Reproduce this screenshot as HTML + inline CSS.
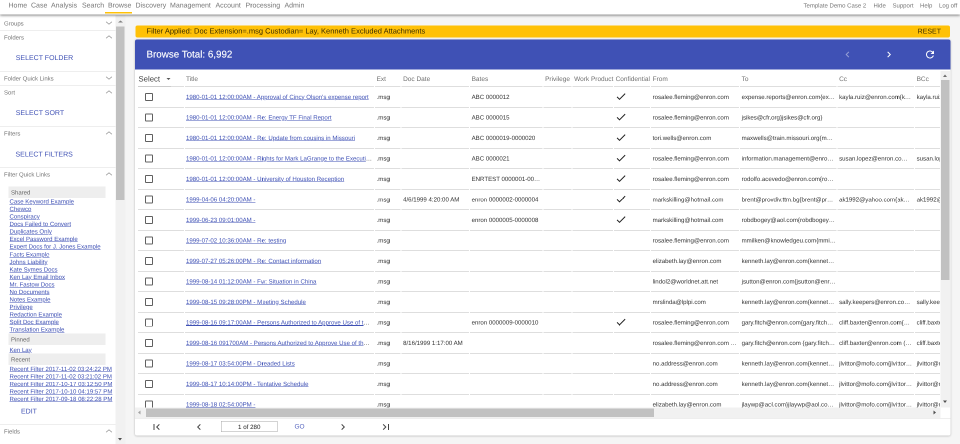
<!DOCTYPE html>
<html lang="en"><head><meta charset="utf-8"><title>Browse</title>
<style>
html,body{margin:0;padding:0;width:960px;height:444px;overflow:hidden;background:#f5f5f5;}
#s{position:absolute;left:0;top:0;width:1920px;height:888px;transform:scale(.5);transform-origin:0 0;will-change:transform;font-family:"Liberation Sans",Arial,sans-serif;color:#333;overflow:hidden;background:#f5f5f5;text-rendering:geometricPrecision;}
#s *{box-sizing:border-box;}
#f{position:absolute;left:0;top:0;width:1920px;height:888px;filter:blur(0.45px);}
a{color:#3f51b5;text-decoration:underline;}
/* nav */
#nav{position:absolute;left:0;top:0;width:1920px;height:29px;background:#fff;box-shadow:0 2px 5px rgba(0,0,0,.5);z-index:5;font-size:14px;color:#777;}
#nav span{position:absolute;top:2px;line-height:16px;white-space:nowrap;}
#nav .r{font-size:12px;top:3px;}
#nav i{position:absolute;left:210px;top:24px;width:54px;height:3px;background:#ffc107;}
/* sidebar */
#side{position:absolute;left:0;top:30px;width:231px;height:858px;background:#fff;}
#sbar{position:absolute;left:230.5px;top:30px;width:20.5px;height:858px;background:#f1f1f1;}
#sbar b{position:absolute;left:1.7px;top:23px;width:16.5px;height:346.500px;background:#c1c1c1;}
.ph{position:absolute;left:0;width:231px;height:1px;background:#ddd;}
.pt{position:absolute;left:8px;margin-top:0;font-size:12px;line-height:16px;color:#777;white-space:nowrap;}
.chev{position:absolute;left:206px;margin-top:-1.5px;fill:none;stroke:#858585;stroke-width:1.3;}
.btn{position:absolute;font-size:14px;line-height:16px;color:#3f51b5;white-space:nowrap;}
.gb{position:absolute;left:17px;width:194px;height:23px;background:#eee;font-size:12px;line-height:24px;padding-left:5px;color:#666;}
.qls{position:absolute;left:19px;}
.ql{font-size:12.1px;line-height:15.09px;height:15.09px;white-space:nowrap;}
/* main */
#yb{position:absolute;left:271px;top:51px;width:1629px;height:24px;background:#ffc107;border-radius:4px;font-size:15px;line-height:23px;color:#3a2c00;}
#yb span{position:absolute;left:22px;top:0;white-space:nowrap;}
#yb em{position:absolute;right:18px;top:-0.5px;font-style:normal;font-size:14px;}
#card{position:absolute;left:270px;top:79px;width:1631px;height:792px;background:#fff;border-radius:4px;box-shadow:0 1px 4px rgba(0,0,0,.27);}
#bh{position:absolute;left:0;top:0;width:1631px;height:60px;background:#3f51b5;border-radius:4px 4px 0 0;color:#fff;font-size:20px;}
#bh span{position:absolute;left:23px;top:18px;font-size:19.6px;line-height:24px;-webkit-text-stroke:0.25px #fff;white-space:nowrap;}
#bh svg{position:absolute;top:18px;fill:#fff;}
#sc{position:absolute;left:0;top:63px;width:1610px;height:673px;overflow:hidden;}
#vs{position:absolute;left:1610.5px;top:63px;width:19.5px;height:673px;background:#f1f1f1;}
#vs b{position:absolute;left:1.5px;top:18px;width:16.5px;height:400px;background:#c1c1c1;}
#hs{position:absolute;left:0;top:736px;width:1610.5px;height:21px;background:#f1f1f1;}
#hs b{position:absolute;left:22px;top:1.5px;width:1016px;height:17px;background:#c1c1c1;}
.ar{position:absolute;width:0;height:0;border:4px solid transparent;}
#tb{position:absolute;left:0;top:0;width:1720px;height:700px;font-size:12.2px;color:#333;}
.hr,.tr{position:absolute;left:0;width:1720px;}
.hr{top:2px;height:30px;font-size:13px;color:#707070;}
.tr{height:39px;}
.c{position:absolute;top:0;height:100%;border-bottom:1px solid #bdbdbd;white-space:nowrap;}
.ht{position:absolute;left:3.2px;top:5.5px;line-height:15px;}
.c2 .ht,.c2 .el{left:2px !important;}
.st{position:absolute;left:1px;top:6px;font-size:15.5px;line-height:18px;color:#444;}
.sa{position:absolute;left:57px;top:12px;width:0;height:0;border-left:4px solid transparent;border-right:4px solid transparent;border-top:4px solid #555;}
.su{position:absolute;left:0;bottom:-1px;width:66px;height:1px;background:#bbb;}
.el{overflow:hidden;text-overflow:ellipsis;white-space:nowrap;position:absolute;left:3.2px;top:10.6px;line-height:14px;height:14px;max-width:100%;}
.c2 .el{width:373px;}.c5 .el{width:138px;}.c9 .el{width:169px;}.c10 .el{width:189px;}.c11 .el{width:146px;}
.cb{position:absolute;left:13.5px;top:10px;width:16px;height:16px;border:2px solid #606060;border-radius:2px;}
.chk{position:absolute;left:2px;top:5px;fill:#222;}
#pg{position:absolute;left:0;top:757px;width:1631px;height:35px;border-top:1px solid #ddd;}
#pg svg{position:absolute;top:5px;fill:#444;}
#pg .pi{position:absolute;left:172px;top:5px;width:113px;height:22px;border:1px solid #a8a8a8;font-size:12.4px;line-height:22px;text-align:center;color:#222;background:#fff;}
#pg span{position:absolute;left:319px;top:7.5px;font-size:13px;line-height:16px;color:#4f5fbd;}
</style></head><body>
<div id="s"><div id="f">
<div id="nav">
<span style="left:17px">Home</span><span style="left:62px">Case</span><span style="left:102px">Analysis</span><span style="left:164px">Search</span><span style="left:216px">Browse</span><span style="left:271px">Discovery</span><span style="left:340px">Management</span><span style="left:431px">Account</span><span style="left:491px">Processing</span><span style="left:569px">Admin</span>
<i></i>
<span class="r" style="left:1607px">Template Demo Case 2</span><span class="r" style="left:1747px">Hide</span><span class="r" style="left:1785px">Support</span><span class="r" style="left:1840px">Help</span><span class="r" style="left:1878px">Log off</span>
</div>

<div id="side">
<div class="pt" style="top:9px">Groups</div><svg class="chev" style="top:5px" viewBox="0 0 24 24" width="24" height="24"><path d="M6.2 9.600L12 14.400l5.800-4.800"/></svg>
<div class="ph" style="top:31px"></div>
<div class="pt" style="top:37px">Folders</div><svg class="chev" style="top:33px" viewBox="0 0 24 24" width="24" height="24"><path d="M6.2 14.400L12 9.600l5.800 4.800"/></svg>
<div class="btn" style="left:31.5px;top:77px">SELECT FOLDER</div>
<div class="ph" style="top:113px"></div>
<div class="pt" style="top:119px">Folder Quick Links</div><svg class="chev" style="top:115px" viewBox="0 0 24 24" width="24" height="24"><path d="M6.2 9.600L12 14.400l5.800-4.800"/></svg>
<div class="ph" style="top:141px"></div>
<div class="pt" style="top:147px">Sort</div><svg class="chev" style="top:143px" viewBox="0 0 24 24" width="24" height="24"><path d="M6.2 14.400L12 9.600l5.800 4.800"/></svg>
<div class="btn" style="left:31.5px;top:187px">SELECT SORT</div>
<div class="ph" style="top:223px"></div>
<div class="pt" style="top:229px">Filters</div><svg class="chev" style="top:225px" viewBox="0 0 24 24" width="24" height="24"><path d="M6.2 14.400L12 9.600l5.800 4.800"/></svg>
<div class="btn" style="left:31px;top:270px">SELECT FILTERS</div>
<div class="ph" style="top:304px"></div>
<div class="pt" style="top:311px">Filter Quick Links</div><svg class="chev" style="top:307px" viewBox="0 0 24 24" width="24" height="24"><path d="M6.2 14.400L12 9.600l5.800 4.800"/></svg>
<div class="gb" style="top:343px">Shared</div>
<div class="qls" style="top:366px">
<div class="ql"><a>Case Keyword Example</a></div>
<div class="ql"><a>Chewco</a></div>
<div class="ql"><a>Conspiracy</a></div>
<div class="ql"><a>Docs Failed to Convert</a></div>
<div class="ql"><a>Duplicates Only</a></div>
<div class="ql"><a>Excel Password Example</a></div>
<div class="ql"><a>Expert Docs for J. Jones Example</a></div>
<div class="ql"><a>Facts Example</a></div>
<div class="ql"><a>Johns Liability</a></div>
<div class="ql"><a>Kate Symes Docs</a></div>
<div class="ql"><a>Ken Lay Email Inbox</a></div>
<div class="ql"><a>Mr. Fastow Docs</a></div>
<div class="ql"><a>No Documents</a></div>
<div class="ql"><a>Notes Example</a></div>
<div class="ql"><a>Privilege</a></div>
<div class="ql"><a>Redaction Example</a></div>
<div class="ql"><a>Split Doc Example</a></div>
<div class="ql"><a>Translation Example</a></div>
</div>
<div class="gb" style="top:637px">Pinned</div>
<div class="qls" style="top:662.5px"><div class="ql"><a>Ken Lay</a></div></div>
<div class="gb" style="top:677px">Recent</div>
<div class="qls" style="top:700.5px">
<div class="ql"><a>Recent Filter 2017-11-02 03:24:22 PM</a></div>
<div class="ql"><a>Recent Filter 2017-11-02 03:21:02 PM</a></div>
<div class="ql"><a>Recent Filter 2017-10-17 03:12:50 PM</a></div>
<div class="ql"><a>Recent Filter 2017-10-10 04:19:57 PM</a></div>
<div class="ql"><a>Recent Filter 2017-09-18 08:22:28 PM</a></div>
</div>
<div class="btn" style="left:42px;top:784px">EDIT</div>
<div class="ph" style="top:818px"></div>
<div class="pt" style="top:825px">Fields</div><svg class="chev" style="top:821px" viewBox="0 0 24 24" width="24" height="24"><path d="M6.2 14.400L12 9.600l5.800 4.800"/></svg>
</div>
<div id="sbar"><b></b><div class="ar" style="left:5px;top:11px;border-width:0 5px 4.5px 5px;border-bottom-color:#808080"></div><div class="ar" style="left:5.5px;top:846px;border-width:5px 4.5px 0 4.5px;border-top-color:#505050"></div></div>

<div id="yb"><span>Filter Applied: Doc Extension=.msg Custodian= Lay, Kenneth Excluded Attachments</span><em>RESET</em></div>

<div id="card">
<div id="bh"><span>Browse Total: 6,992</span>
<svg style="left:1413px;opacity:.45" viewBox="0 0 24 24" width="24" height="24"><path d="M15.41 7.41L14 6l-6 6 6 6 1.41-1.41L10.83 12z"/></svg>
<svg style="left:1496px" viewBox="0 0 24 24" width="24" height="24"><path d="M10 6L8.59 7.41 13.17 12l-4.58 4.59L10 18l6-6z"/></svg>
<svg style="left:1578px" viewBox="0 0 24 24" width="24" height="24"><path d="M17.65 6.35C16.2 4.9 14.21 4 12 4c-4.42 0-7.99 3.58-7.99 8s3.57 8 7.99 8c3.73 0 6.84-2.55 7.73-6h-2.08c-.82 2.33-3.04 4-5.65 4-3.31 0-6-2.69-6-6s2.690-6 6-6c1.66 0 3.14.69 4.22 1.78L13 11h7V4l-2.35 2.35z"/></svg>
</div>
<div id="sc">
<div id="tb">
<div class="hr"><div class="c c1" style="left:6px;width:92px"><span class="st">Select</span><i class="sa"></i><i class="su"></i></div><div class="c c2" style="left:100px;width:378px"><span class="ht">Title</span></div><div class="c c3" style="left:480px;width:51px"><span class="ht">Ext</span></div><div class="c c4" style="left:533px;width:135px"><span class="ht">Doc Date</span></div><div class="c c5" style="left:670px;width:145px"><span class="ht">Bates</span></div><div class="c c6" style="left:817px;width:56px"><span class="ht">Privilege</span></div><div class="c c7" style="left:875px;width:81px"><span class="ht">Work Product</span></div><div class="c c8" style="left:958px;width:72px"><span class="ht">Confidential</span></div><div class="c c9" style="left:1032px;width:176px"><span class="ht">From</span></div><div class="c c10" style="left:1210px;width:193px"><span class="ht">To</span></div><div class="c c11" style="left:1405px;width:153px"><span class="ht">Cc</span></div><div class="c c12" style="left:1560px;width:160px"><span class="ht">BCc</span></div></div>
<div class="tr" style="top:34px"><div class="c c1" style="left:6px;width:92px"><span class="cb"></span></div><div class="c c2" style="left:100px;width:378px"><div class="el"><a>1980-01-01 12:00:00AM - Approval of Cincy Olson&#x27;s expense report</a></div></div><div class="c c3" style="left:480px;width:51px"><div class="el">.msg</div></div><div class="c c4" style="left:533px;width:135px"><div class="el"></div></div><div class="c c5" style="left:670px;width:145px"><div class="el">ABC 0000012</div></div><div class="c c6" style="left:817px;width:56px"></div><div class="c c7" style="left:875px;width:81px"></div><div class="c c8" style="left:958px;width:72px"><svg class="chk" viewBox="0 0 24 24" width="24" height="24"><path d="M9 16.2L4.8 12l-1.4 1.4L9 19 21 7l-1.4-1.4L9 16.2z"/></svg></div><div class="c c9" style="left:1032px;width:176px"><div class="el">rosalee.fleming@enron.com</div></div><div class="c c10" style="left:1210px;width:193px"><div class="el">expense.reports@enron.com{expense.reports@enron.com}</div></div><div class="c c11" style="left:1405px;width:153px"><div class="el">kayla.ruiz@enron.com{kayla.ruiz@enron.com}</div></div><div class="c c12" style="left:1560px;width:160px"><div class="el">kayla.ruiz@enron.com</div></div></div>
<div class="tr" style="top:75px"><div class="c c1" style="left:6px;width:92px"><span class="cb"></span></div><div class="c c2" style="left:100px;width:378px"><div class="el"><a>1980-01-01 12:00:00AM - Re: Energy TF Final Report</a></div></div><div class="c c3" style="left:480px;width:51px"><div class="el">.msg</div></div><div class="c c4" style="left:533px;width:135px"><div class="el"></div></div><div class="c c5" style="left:670px;width:145px"><div class="el">ABC 0000015</div></div><div class="c c6" style="left:817px;width:56px"></div><div class="c c7" style="left:875px;width:81px"></div><div class="c c8" style="left:958px;width:72px"><svg class="chk" viewBox="0 0 24 24" width="24" height="24"><path d="M9 16.2L4.8 12l-1.4 1.4L9 19 21 7l-1.4-1.4L9 16.2z"/></svg></div><div class="c c9" style="left:1032px;width:176px"><div class="el">rosalee.fleming@enron.com</div></div><div class="c c10" style="left:1210px;width:193px"><div class="el">jsikes@cfr.org}jsikes@cfr.org}</div></div><div class="c c11" style="left:1405px;width:153px"><div class="el"></div></div><div class="c c12" style="left:1560px;width:160px"><div class="el"></div></div></div>
<div class="tr" style="top:116px"><div class="c c1" style="left:6px;width:92px"><span class="cb"></span></div><div class="c c2" style="left:100px;width:378px"><div class="el"><a>1980-01-01 12:00:00AM - Re: Update from cousins in Missouri</a></div></div><div class="c c3" style="left:480px;width:51px"><div class="el">.msg</div></div><div class="c c4" style="left:533px;width:135px"><div class="el"></div></div><div class="c c5" style="left:670px;width:145px"><div class="el">ABC 0000019-0000020</div></div><div class="c c6" style="left:817px;width:56px"></div><div class="c c7" style="left:875px;width:81px"></div><div class="c c8" style="left:958px;width:72px"><svg class="chk" viewBox="0 0 24 24" width="24" height="24"><path d="M9 16.2L4.8 12l-1.4 1.4L9 19 21 7l-1.4-1.4L9 16.2z"/></svg></div><div class="c c9" style="left:1032px;width:176px"><div class="el">tori.wells@enron.com</div></div><div class="c c10" style="left:1210px;width:193px"><div class="el">maxwells@train.missouri.org{maxwells@train.missouri.org}</div></div><div class="c c11" style="left:1405px;width:153px"><div class="el"></div></div><div class="c c12" style="left:1560px;width:160px"><div class="el"></div></div></div>
<div class="tr" style="top:157px"><div class="c c1" style="left:6px;width:92px"><span class="cb"></span></div><div class="c c2" style="left:100px;width:378px"><div class="el"><a>1980-01-01 12:00:00AM - Rights for Mark LaGrange to the Executive Committee</a></div></div><div class="c c3" style="left:480px;width:51px"><div class="el">.msg</div></div><div class="c c4" style="left:533px;width:135px"><div class="el"></div></div><div class="c c5" style="left:670px;width:145px"><div class="el">ABC 0000021</div></div><div class="c c6" style="left:817px;width:56px"></div><div class="c c7" style="left:875px;width:81px"></div><div class="c c8" style="left:958px;width:72px"><svg class="chk" viewBox="0 0 24 24" width="24" height="24"><path d="M9 16.2L4.8 12l-1.4 1.4L9 19 21 7l-1.4-1.4L9 16.2z"/></svg></div><div class="c c9" style="left:1032px;width:176px"><div class="el">rosalee.fleming@enron.com</div></div><div class="c c10" style="left:1210px;width:193px"><div class="el">information.management@enron.com{information}</div></div><div class="c c11" style="left:1405px;width:153px"><div class="el">susan.lopez@enron.com{susan.lopez}</div></div><div class="c c12" style="left:1560px;width:160px"><div class="el">susan.lopez@enron.com</div></div></div>
<div class="tr" style="top:198px"><div class="c c1" style="left:6px;width:92px"><span class="cb"></span></div><div class="c c2" style="left:100px;width:378px"><div class="el"><a>1980-01-01 12:00:00AM - University of Houston Reception</a></div></div><div class="c c3" style="left:480px;width:51px"><div class="el">.msg</div></div><div class="c c4" style="left:533px;width:135px"><div class="el"></div></div><div class="c c5" style="left:670px;width:145px"><div class="el">ENRTEST 0000001-0000002</div></div><div class="c c6" style="left:817px;width:56px"></div><div class="c c7" style="left:875px;width:81px"></div><div class="c c8" style="left:958px;width:72px"><svg class="chk" viewBox="0 0 24 24" width="24" height="24"><path d="M9 16.2L4.8 12l-1.4 1.4L9 19 21 7l-1.4-1.4L9 16.2z"/></svg></div><div class="c c9" style="left:1032px;width:176px"><div class="el">rosalee.fleming@enron.com</div></div><div class="c c10" style="left:1210px;width:193px"><div class="el">rodolfo.acevedo@enron.com{rodolfo.acevedo}</div></div><div class="c c11" style="left:1405px;width:153px"><div class="el"></div></div><div class="c c12" style="left:1560px;width:160px"><div class="el"></div></div></div>
<div class="tr" style="top:239px"><div class="c c1" style="left:6px;width:92px"><span class="cb"></span></div><div class="c c2" style="left:100px;width:378px"><div class="el"><a>1999-04-06 04:20:00AM -</a></div></div><div class="c c3" style="left:480px;width:51px"><div class="el">.msg</div></div><div class="c c4" style="left:533px;width:135px"><div class="el">4/6/1999 4:20:00 AM</div></div><div class="c c5" style="left:670px;width:145px"><div class="el">enron 0000002-0000004</div></div><div class="c c6" style="left:817px;width:56px"></div><div class="c c7" style="left:875px;width:81px"></div><div class="c c8" style="left:958px;width:72px"><svg class="chk" viewBox="0 0 24 24" width="24" height="24"><path d="M9 16.2L4.8 12l-1.4 1.4L9 19 21 7l-1.4-1.4L9 16.2z"/></svg></div><div class="c c9" style="left:1032px;width:176px"><div class="el">markskilling@hotmail.com</div></div><div class="c c10" style="left:1210px;width:193px"><div class="el">brent@provdiv.ttm.bg{brent@provdiv.ttm.bg}</div></div><div class="c c11" style="left:1405px;width:153px"><div class="el">ak1992@yahoo.com{ak1992@yahoo.com}</div></div><div class="c c12" style="left:1560px;width:160px"><div class="el">ak1992@yahoo.com</div></div></div>
<div class="tr" style="top:280px"><div class="c c1" style="left:6px;width:92px"><span class="cb"></span></div><div class="c c2" style="left:100px;width:378px"><div class="el"><a>1999-06-23 09:01:00AM -</a></div></div><div class="c c3" style="left:480px;width:51px"><div class="el">.msg</div></div><div class="c c4" style="left:533px;width:135px"><div class="el"></div></div><div class="c c5" style="left:670px;width:145px"><div class="el">enron 0000005-0000008</div></div><div class="c c6" style="left:817px;width:56px"></div><div class="c c7" style="left:875px;width:81px"></div><div class="c c8" style="left:958px;width:72px"><svg class="chk" viewBox="0 0 24 24" width="24" height="24"><path d="M9 16.2L4.8 12l-1.4 1.4L9 19 21 7l-1.4-1.4L9 16.2z"/></svg></div><div class="c c9" style="left:1032px;width:176px"><div class="el">markskilling@hotmail.com</div></div><div class="c c10" style="left:1210px;width:193px"><div class="el">robdbogey@aol.com{robdbogey@aol.com}</div></div><div class="c c11" style="left:1405px;width:153px"><div class="el"></div></div><div class="c c12" style="left:1560px;width:160px"><div class="el"></div></div></div>
<div class="tr" style="top:321px"><div class="c c1" style="left:6px;width:92px"><span class="cb"></span></div><div class="c c2" style="left:100px;width:378px"><div class="el"><a>1999-07-02 10:36:00AM - Re: testing</a></div></div><div class="c c3" style="left:480px;width:51px"><div class="el">.msg</div></div><div class="c c4" style="left:533px;width:135px"><div class="el"></div></div><div class="c c5" style="left:670px;width:145px"><div class="el"></div></div><div class="c c6" style="left:817px;width:56px"></div><div class="c c7" style="left:875px;width:81px"></div><div class="c c8" style="left:958px;width:72px"></div><div class="c c9" style="left:1032px;width:176px"><div class="el">rosalee.fleming@enron.com</div></div><div class="c c10" style="left:1210px;width:193px"><div class="el">mmilken@knowledgeu.com{mmilken@knowledgeu.com}</div></div><div class="c c11" style="left:1405px;width:153px"><div class="el"></div></div><div class="c c12" style="left:1560px;width:160px"><div class="el"></div></div></div>
<div class="tr" style="top:362px"><div class="c c1" style="left:6px;width:92px"><span class="cb"></span></div><div class="c c2" style="left:100px;width:378px"><div class="el"><a>1999-07-27 05:26:00PM - Re: Contact information</a></div></div><div class="c c3" style="left:480px;width:51px"><div class="el">.msg</div></div><div class="c c4" style="left:533px;width:135px"><div class="el"></div></div><div class="c c5" style="left:670px;width:145px"><div class="el"></div></div><div class="c c6" style="left:817px;width:56px"></div><div class="c c7" style="left:875px;width:81px"></div><div class="c c8" style="left:958px;width:72px"></div><div class="c c9" style="left:1032px;width:176px"><div class="el">elizabeth.lay@enron.com</div></div><div class="c c10" style="left:1210px;width:193px"><div class="el">kenneth.lay@enron.com{kenneth.lay@enron.com}</div></div><div class="c c11" style="left:1405px;width:153px"><div class="el"></div></div><div class="c c12" style="left:1560px;width:160px"><div class="el"></div></div></div>
<div class="tr" style="top:403px"><div class="c c1" style="left:6px;width:92px"><span class="cb"></span></div><div class="c c2" style="left:100px;width:378px"><div class="el"><a>1999-08-14 01:12:00AM - Fw: Situation in China</a></div></div><div class="c c3" style="left:480px;width:51px"><div class="el">.msg</div></div><div class="c c4" style="left:533px;width:135px"><div class="el"></div></div><div class="c c5" style="left:670px;width:145px"><div class="el"></div></div><div class="c c6" style="left:817px;width:56px"></div><div class="c c7" style="left:875px;width:81px"></div><div class="c c8" style="left:958px;width:72px"></div><div class="c c9" style="left:1032px;width:176px"><div class="el">lindol2@worldnet.att.net</div></div><div class="c c10" style="left:1210px;width:193px"><div class="el">jsutton@enron.com{jsutton@enron.com}</div></div><div class="c c11" style="left:1405px;width:153px"><div class="el"></div></div><div class="c c12" style="left:1560px;width:160px"><div class="el"></div></div></div>
<div class="tr" style="top:444px"><div class="c c1" style="left:6px;width:92px"><span class="cb"></span></div><div class="c c2" style="left:100px;width:378px"><div class="el"><a>1999-08-15 09:28:00PM - Meeting Schedule</a></div></div><div class="c c3" style="left:480px;width:51px"><div class="el">.msg</div></div><div class="c c4" style="left:533px;width:135px"><div class="el"></div></div><div class="c c5" style="left:670px;width:145px"><div class="el"></div></div><div class="c c6" style="left:817px;width:56px"></div><div class="c c7" style="left:875px;width:81px"></div><div class="c c8" style="left:958px;width:72px"></div><div class="c c9" style="left:1032px;width:176px"><div class="el">mrslinda@lplpi.com</div></div><div class="c c10" style="left:1210px;width:193px"><div class="el">kenneth.lay@enron.com{kenneth.lay@enron.com}</div></div><div class="c c11" style="left:1405px;width:153px"><div class="el">sally.keepers@enron.com{sally.keepers}</div></div><div class="c c12" style="left:1560px;width:160px"><div class="el">sally.keepers@enron.com</div></div></div>
<div class="tr" style="top:485px"><div class="c c1" style="left:6px;width:92px"><span class="cb"></span></div><div class="c c2" style="left:100px;width:378px"><div class="el"><a>1999-08-16 09:17:00AM - Persons Authorized to Approve Use of the Corporate Aircraft</a></div></div><div class="c c3" style="left:480px;width:51px"><div class="el">.msg</div></div><div class="c c4" style="left:533px;width:135px"><div class="el"></div></div><div class="c c5" style="left:670px;width:145px"><div class="el">enron 0000009-0000010</div></div><div class="c c6" style="left:817px;width:56px"></div><div class="c c7" style="left:875px;width:81px"></div><div class="c c8" style="left:958px;width:72px"><svg class="chk" viewBox="0 0 24 24" width="24" height="24"><path d="M9 16.2L4.8 12l-1.4 1.4L9 19 21 7l-1.4-1.4L9 16.2z"/></svg></div><div class="c c9" style="left:1032px;width:176px"><div class="el">rosalee.fleming@enron.com</div></div><div class="c c10" style="left:1210px;width:193px"><div class="el">gary.fitch@enron.com{gary.fitch@enron.com}</div></div><div class="c c11" style="left:1405px;width:153px"><div class="el">cliff.baxter@enron.com{cliff.baxter}</div></div><div class="c c12" style="left:1560px;width:160px"><div class="el">cliff.baxter@enron.com</div></div></div>
<div class="tr" style="top:526px"><div class="c c1" style="left:6px;width:92px"><span class="cb"></span></div><div class="c c2" style="left:100px;width:378px"><div class="el"><a>1999-08-16 091700AM - Persons Authorized to Approve Use of the Corporate Aircraft</a></div></div><div class="c c3" style="left:480px;width:51px"><div class="el">.msg</div></div><div class="c c4" style="left:533px;width:135px"><div class="el">8/16/1999 1:17:00 AM</div></div><div class="c c5" style="left:670px;width:145px"><div class="el"></div></div><div class="c c6" style="left:817px;width:56px"></div><div class="c c7" style="left:875px;width:81px"></div><div class="c c8" style="left:958px;width:72px"></div><div class="c c9" style="left:1032px;width:176px"><div class="el">rosalee.fleming@enron.com (rosalee)</div></div><div class="c c10" style="left:1210px;width:193px"><div class="el">gary.fitch@enron.com {gary.fitch@enron.com}</div></div><div class="c c11" style="left:1405px;width:153px"><div class="el">cliff.baxter@enron.com (cliff.baxter)</div></div><div class="c c12" style="left:1560px;width:160px"><div class="el">cliff.baxter@enron.com</div></div></div>
<div class="tr" style="top:567px"><div class="c c1" style="left:6px;width:92px"><span class="cb"></span></div><div class="c c2" style="left:100px;width:378px"><div class="el"><a>1999-08-17 03:54:00PM - Dreaded Lists</a></div></div><div class="c c3" style="left:480px;width:51px"><div class="el">.msg</div></div><div class="c c4" style="left:533px;width:135px"><div class="el"></div></div><div class="c c5" style="left:670px;width:145px"><div class="el"></div></div><div class="c c6" style="left:817px;width:56px"></div><div class="c c7" style="left:875px;width:81px"></div><div class="c c8" style="left:958px;width:72px"></div><div class="c c9" style="left:1032px;width:176px"><div class="el">no.address@enron.com</div></div><div class="c c10" style="left:1210px;width:193px"><div class="el">kenneth.lay@enron.com{kenneth.lay@enron.com}</div></div><div class="c c11" style="left:1405px;width:153px"><div class="el">jlvittor@mofo.com{jlvittor@mofo.com}</div></div><div class="c c12" style="left:1560px;width:160px"><div class="el">jlvittor@mofo.com</div></div></div>
<div class="tr" style="top:608px"><div class="c c1" style="left:6px;width:92px"><span class="cb"></span></div><div class="c c2" style="left:100px;width:378px"><div class="el"><a>1999-08-17 10:14:00PM - Tentative Schedule</a></div></div><div class="c c3" style="left:480px;width:51px"><div class="el">.msg</div></div><div class="c c4" style="left:533px;width:135px"><div class="el"></div></div><div class="c c5" style="left:670px;width:145px"><div class="el"></div></div><div class="c c6" style="left:817px;width:56px"></div><div class="c c7" style="left:875px;width:81px"></div><div class="c c8" style="left:958px;width:72px"></div><div class="c c9" style="left:1032px;width:176px"><div class="el">no.address@enron.com</div></div><div class="c c10" style="left:1210px;width:193px"><div class="el">kenneth.lay@enron.com{kenneth.lay@enron.com}</div></div><div class="c c11" style="left:1405px;width:153px"><div class="el">jlvittor@mofo.com{jlvittor@mofo.com}</div></div><div class="c c12" style="left:1560px;width:160px"><div class="el">jlvittor@mofo.com</div></div></div>
<div class="tr" style="top:649px"><div class="c c1" style="left:6px;width:92px"><span class="cb"></span></div><div class="c c2" style="left:100px;width:378px"><div class="el"><a>1999-08-18 02:54:00PM -</a></div></div><div class="c c3" style="left:480px;width:51px"><div class="el">.msg</div></div><div class="c c4" style="left:533px;width:135px"><div class="el"></div></div><div class="c c5" style="left:670px;width:145px"><div class="el"></div></div><div class="c c6" style="left:817px;width:56px"></div><div class="c c7" style="left:875px;width:81px"></div><div class="c c8" style="left:958px;width:72px"></div><div class="c c9" style="left:1032px;width:176px"><div class="el">elizabeth.lay@enron.com</div></div><div class="c c10" style="left:1210px;width:193px"><div class="el">jlaywp@aol.com}jlaywp@aol.com}jlaywp@aol.com</div></div><div class="c c11" style="left:1405px;width:153px"><div class="el">jlvittor@mofo.com{jlvittor@mofo.com}</div></div><div class="c c12" style="left:1560px;width:160px"><div class="el">jlvittor@mofo.com</div></div></div>
</div>
</div>
<div id="vs"><b></b><div class="ar" style="left:5.3px;top:6.5px;border-width:0 4.5px 5px 4.5px;border-bottom-color:#707070"></div><div class="ar" style="left:5.3px;top:658.5px;border-width:5px 4.5px 0 4.5px;border-top-color:#505050"></div></div>
<div id="hs"><b></b><div class="ar" style="left:6px;top:5.5px;border-width:4.5px 5.5px 4.5px 0;border-right-color:#a3a3a3"></div><div class="ar" style="left:1596.5px;top:5.5px;border-width:4.5px 0 4.5px 5.5px;border-left-color:#505050"></div></div>
<div id="pg">
<svg style="left:31px" viewBox="0 0 24 24" width="24" height="24"><path d="M18.41 16.59L13.82 12l4.59-4.59L17 6l-6 6 6 6zM6 6h2v12H6z"/></svg>
<svg style="left:116px" viewBox="0 0 24 24" width="24" height="24"><path d="M15.41 7.41L14 6l-6 6 6 6 1.41-1.41L10.83 12z"/></svg>
<div class="pi">1 of 280</div>
<span>GO</span>
<svg style="left:404px" viewBox="0 0 24 24" width="24" height="24"><path d="M10 6L8.59 7.41 13.17 12l-4.58 4.59L10 18l6-6z"/></svg>
<svg style="left:490px" viewBox="0 0 24 24" width="24" height="24"><path d="M5.59 7.41L10.18 12l-4.59 4.59L7 18l6-6-6-6zM16 6h2v12h-2z"/></svg>
</div>
</div>
</div></div>
</body></html>
